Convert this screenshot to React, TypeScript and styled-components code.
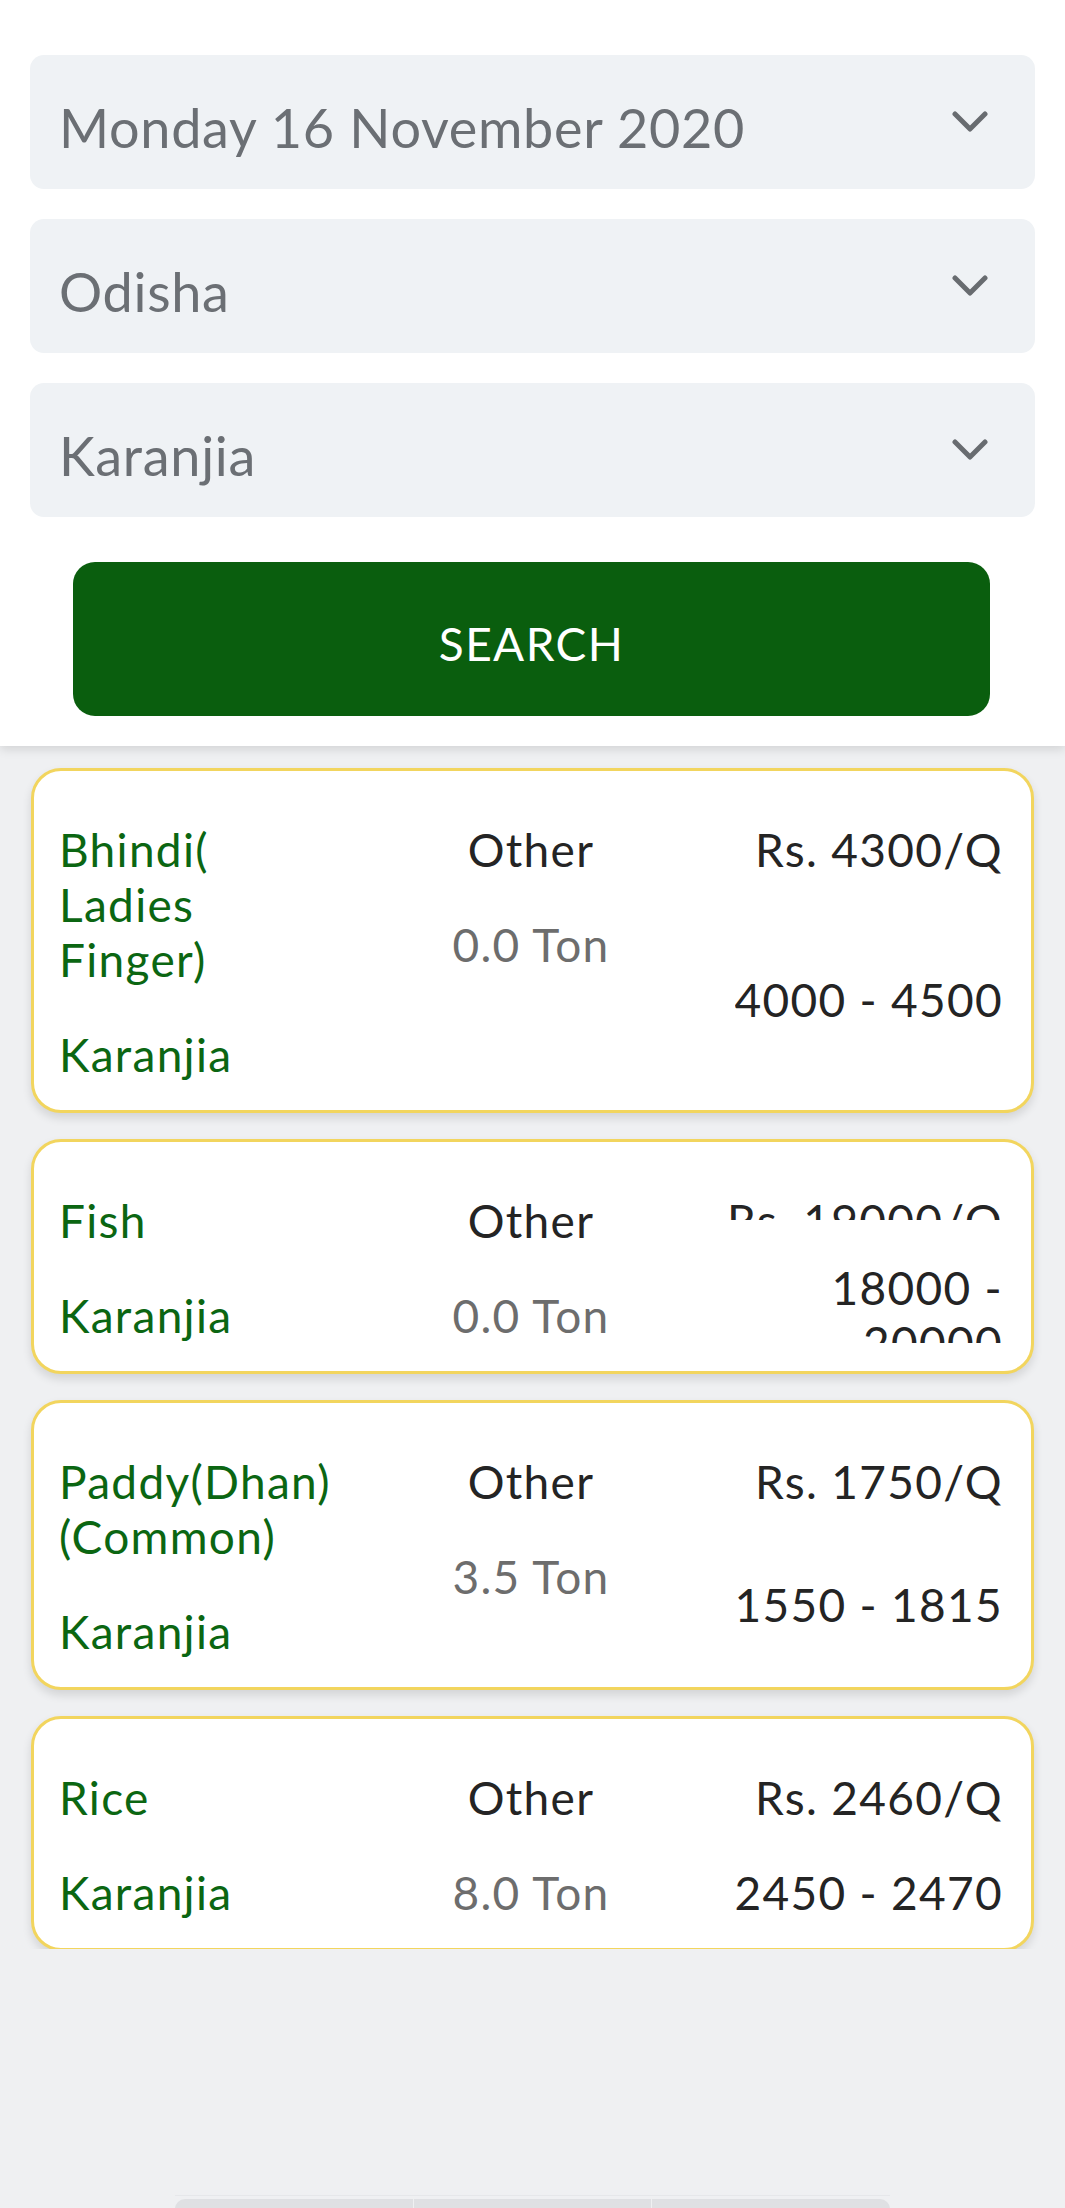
import React from "react";
import styled, { createGlobalStyle } from "styled-components";

const GlobalStyle = createGlobalStyle`
  html, body {
    margin: 0;
    padding: 0;
    background: #eff0f2;
    font-family: Lato, "Open Sans", "Liberation Sans", sans-serif;
  }
  * { box-sizing: border-box; }
`;

const Screen = styled.div`
  height: 2208px;
  overflow: hidden;
  display: flex;
  flex-direction: column;
  background: #eff0f2;
`;

const Header = styled.header`
  background: #ffffff;
  padding: 55px 30px 30px;
  display: flex;
  flex-direction: column;
  gap: 30px;
  box-shadow: 0 3px 10px rgba(0, 0, 0, 0.13);
  position: relative;
  z-index: 2;
`;

const Select = styled.div`
  height: 134px;
  border-radius: 14px;
  background: #eff2f5;
  display: flex;
  align-items: center;
  justify-content: space-between;
  padding: 0 47px 0 29px;
`;

const SelectValue = styled.span`
  font-size: 54px;
  letter-spacing: 0.7px;
  color: #6b6f74;
  padding-top: 10px;
`;

const Chevron = styled.svg`
  width: 36px;
  height: 22px;
  flex: none;
`;

const SearchButton = styled.button`
  margin: 15px 45px 0 43px;
  height: 154px;
  border: none;
  border-radius: 22px;
  background: #0a5e0e;
  color: #ffffff;
  font-family: inherit;
  font-size: 46px;
  letter-spacing: 1.4px;
  padding-top: 9px;
`;

const List = styled.main`
  height: 1203px;
  overflow: hidden;
  padding: 22px 31px 0;
  display: flex;
  flex-direction: column;
  gap: 26px;
  flex: none;
`;

const Card = styled.article`
  background: #ffffff;
  border: 3px solid #f2d55e;
  border-radius: 30px;
  padding: 51px 28px 28px 25px;
  display: grid;
  grid-template-columns: 1fr 1fr 1fr;
  box-shadow: 0 5px 10px rgba(0, 0, 0, 0.12);
  font-size: 46px;
  line-height: 55px;
  letter-spacing: 1.3px;
  flex: none;
`;

const Column = styled.div<{ $align: "left" | "center" | "right" }>`
  display: flex;
  flex-direction: column;
  gap: 40px;
  text-align: ${(p) => p.$align};
  align-items: ${(p) =>
    p.$align === "left" ? "flex-start" : p.$align === "center" ? "center" : "flex-end"};
`;

const GreenText = styled.div`
  color: #0b6612;
  white-space: pre-line;
`;

const DarkText = styled.div`
  color: #242424;
  white-space: pre-line;
`;

const QtyText = styled.div`
  color: #6d6d6d;
`;

const PriceColumn = styled.div`
  display: flex;
  flex-direction: column;
  align-items: flex-end;
  text-align: right;
`;

const PriceCell = styled.div<{ $clip?: number }>`
  color: #242424;
  overflow: hidden;
  max-height: ${(p) => (p.$clip ? `${p.$clip}px` : "none")};
  flex: none;
`;

const RangeCell = styled.div`
  flex: 1 1 0;
  min-height: 0;
  overflow: hidden;
  padding-top: 40px;
  display: flex;
  flex-direction: column;
  justify-content: safe center;
  align-items: flex-end;
`;

const Spacer = styled.div`
  flex: 1;
`;

const BottomBar = styled.nav`
  flex: none;
  height: 13px;
  width: 715px;
  margin: 0 auto;
  border-top: 1px solid #e6e7ea;
  padding-top: 3px;
  display: flex;
  gap: 1px;
`;

const BarSegment = styled.div<{ $pos: "first" | "mid" | "last" }>`
  flex: 1;
  height: 20px;
  background: #dfe0e3;
  border-radius: ${(p) =>
    p.$pos === "first" ? "10px 0 0 0" : p.$pos === "last" ? "0 10px 0 0" : "0"};
`;

type Item = {
  name: string;
  place: string;
  grade: string;
  qty: string;
  price: string;
  range: string;
  priceClip?: number;
};

const items: Item[] = [
  {
    name: "Bhindi(\nLadies\nFinger)",
    place: "Karanjia",
    grade: "Other",
    qty: "0.0 Ton",
    price: "Rs. 4300/Q",
    range: "4000 - 4500",
  },
  {
    name: "Fish",
    place: "Karanjia",
    grade: "Other",
    qty: "0.0 Ton",
    price: "Rs. 19000/Q",
    range: "18000 -\n20000",
    priceClip: 27,
  },
  {
    name: "Paddy(Dhan)\n(Common)",
    place: "Karanjia",
    grade: "Other",
    qty: "3.5 Ton",
    price: "Rs. 1750/Q",
    range: "1550 - 1815",
  },
  {
    name: "Rice",
    place: "Karanjia",
    grade: "Other",
    qty: "8.0 Ton",
    price: "Rs. 2460/Q",
    range: "2450 - 2470",
  },
];

const ChevronIcon = () => (
  <Chevron viewBox="0 0 36 22">
    <polyline
      points="3,3 18,18 33,3"
      fill="none"
      stroke="#686c70"
      strokeWidth="5"
      strokeLinecap="round"
      strokeLinejoin="round"
    />
  </Chevron>
);

const Dropdown = ({ value }: { value: string }) => (
  <Select>
    <SelectValue>{value}</SelectValue>
    <ChevronIcon />
  </Select>
);

const PriceCard = ({ item }: { item: Item }) => (
  <Card>
    <Column $align="left">
      <GreenText>{item.name}</GreenText>
      <GreenText>{item.place}</GreenText>
    </Column>
    <Column $align="center">
      <DarkText>{item.grade}</DarkText>
      <QtyText>{item.qty}</QtyText>
    </Column>
    <PriceColumn>
      <PriceCell $clip={item.priceClip}>{item.price}</PriceCell>
      <RangeCell>
        <DarkText>{item.range}</DarkText>
      </RangeCell>
    </PriceColumn>
  </Card>
);

export default function App() {
  return (
    <>
      <GlobalStyle />
      <Screen>
        <Header>
          <Dropdown value="Monday 16 November 2020" />
          <Dropdown value="Odisha" />
          <Dropdown value="Karanjia" />
          <SearchButton>SEARCH</SearchButton>
        </Header>
        <List>
          {items.map((it, i) => (
            <PriceCard key={i} item={it} />
          ))}
        </List>
        <Spacer />
        <BottomBar>
          <BarSegment $pos="first" />
          <BarSegment $pos="mid" />
          <BarSegment $pos="last" />
        </BottomBar>
      </Screen>
    </>
  );
}
